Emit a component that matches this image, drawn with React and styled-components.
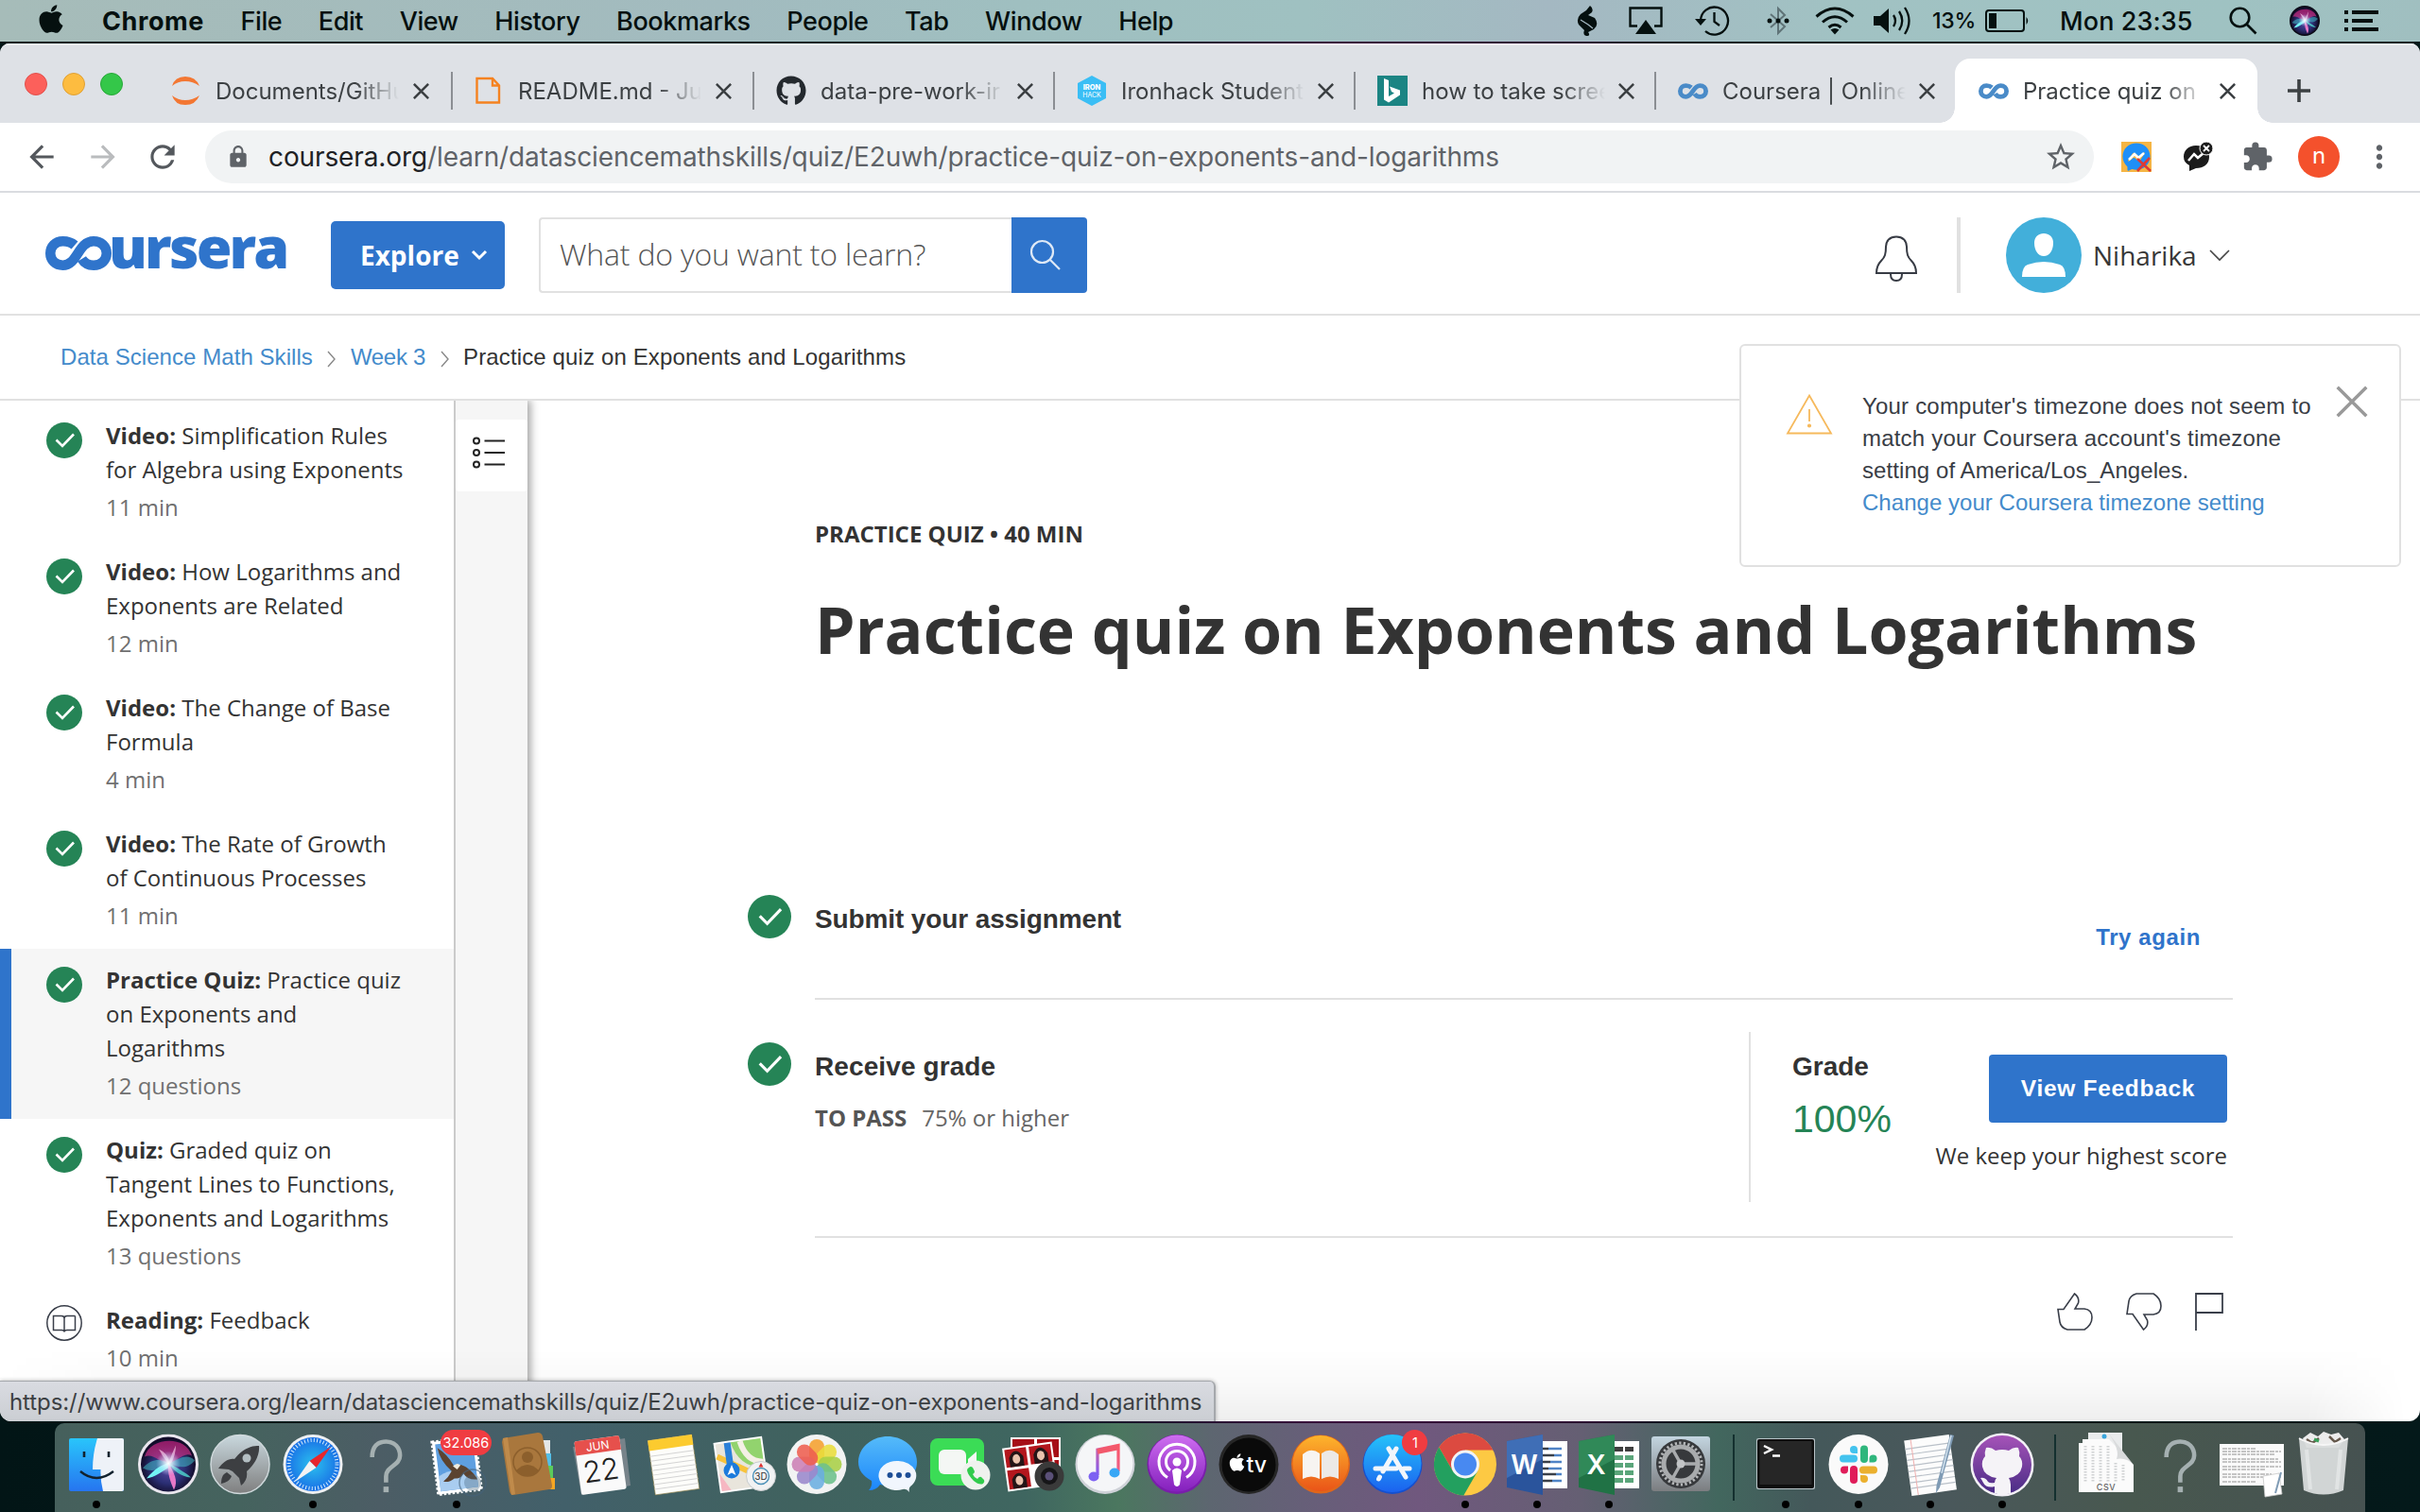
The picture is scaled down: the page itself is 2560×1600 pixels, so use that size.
import React from "react";
import styled, { createGlobalStyle, css } from "styled-components";
import { FaApple, FaGithub, FaFacebookMessenger } from "react-icons/fa";
import { MdArrowBack, MdArrowForward, MdRefresh, MdLock, MdStarBorder, MdExtension, MdMoreVert } from "react-icons/md";

const SYSTEM = `Inter, "Liberation Sans", sans-serif`;
const HELV = `"Liberation Sans", Arial, sans-serif`;
const OPEN = `"Open Sans", "Noto Sans", sans-serif`;
const BLUE = "#2f74cb";
const LINK = "#448bcb";
const GREEN = "#258456";
const LINE = "#e1e1e1";

const Global = createGlobalStyle`
  *, *::before, *::after { box-sizing: border-box; }
  body { margin: 0; background: #031d1e; overflow: hidden; }
  svg { display: block; flex: none; }
`;

const Desktop = styled.div`
  width: 2560px;
  height: 1600px;
  display: flex;
  flex-direction: column;
  gap: 2px;
  overflow: hidden;
  background: linear-gradient(90deg, #021516 0, #04201f 40%, #3a0a3c 55%, #2a0a30 66%, #041616 70%, #04191a 100%);
  font-family: ${SYSTEM};
`;

/* ---------- menu bar ---------- */

const MenuBar = styled.div`
  height: 44px;
  flex: none;
  display: flex;
  align-items: center;
  padding: 0 44px 0 40px;
  color: #05100f;
  font-size: 27px;
  background: linear-gradient(90deg, #a6bcb9 0, #a2bbbf 30%, #9fbfc0 42%, #9fc1c1 54%, #a4b8c2 64%, #a1c2c3 76%, #9fc2c2 92%, #a0bfc0 100%);
`;
const AppleMark = styled(FaApple)`
  width: 28px;
  height: 34px;
  margin-top: -4px;
  margin-right: 40px;
`;
const MenuItem = styled.span`
  margin-right: 38.5px;
  font-weight: ${(p) => (p.$bold ? 700 : 450)};
  letter-spacing: ${(p) => p.$ls || "-0.4px"};
  white-space: nowrap;
`;
const StatusArea = styled.div`
  margin-left: auto;
  display: flex;
  align-items: center;
`;
const StatusCell = styled.div`
  display: flex;
  align-items: center;
  margin-left: ${(p) => p.$gap}px;
`;
const Percent = styled.span`
  width: 48px;
  font-size: 23px;
  letter-spacing: -0.2px;
  font-weight: 450;
  white-space: nowrap;
`;
const Clock = styled.span`
  width: 141px;
  font-weight: 450;
  letter-spacing: 0.1px;
  white-space: nowrap;
`;

/* ---------- browser window ---------- */

const Window = styled.div`
  position: relative;
  height: 1458px;
  flex: none;
  display: flex;
  flex-direction: column;
  background: #fff;
  border-radius: 10px 10px 12px 12px;
  overflow: hidden;
`;
const TabStrip = styled.div`
  height: 84px;
  flex: none;
  display: flex;
  align-items: flex-end;
  background: #dee1e6;
  border-top: 2px solid #eceef1;
`;
const Lights = styled.div`
  height: 82px;
  width: 159px;
  padding: 0 0 0 26px;
  display: flex;
  align-items: center;
  gap: 16px;
`;
const Light = styled.i`
  width: 24px;
  height: 24px;
  border-radius: 50%;
  background: ${(p) => p.$c};
  border: 1px solid ${(p) => p.$b};
`;
const Tab = styled.div`
  position: relative;
  width: ${(p) => p.$w}px;
  height: 68px;
  flex: none;
  display: flex;
  align-items: center;
  padding-left: ${(p) => (p.$active ? 25 : 23)}px;
  border-radius: 16px 16px 0 0;
  ${(p) =>
    p.$active &&
    css`
      background: #fff;
      &::before,
      &::after {
        content: "";
        position: absolute;
        bottom: 0;
        width: 16px;
        height: 16px;
      }
      &::before {
        left: -16px;
        background: radial-gradient(circle at 0 0, transparent 15.5px, #fff 16px);
      }
      &::after {
        right: -16px;
        background: radial-gradient(circle at 100% 0, transparent 15.5px, #fff 16px);
      }
    `}
`;
const TabTitle = styled.span`
  width: ${(p) => (p.$snug ? 205 : 204)}px;
  margin: 0 4px 0 ${(p) => (p.$snug ? 14 : 15)}px;
  white-space: nowrap;
  font-size: 24px;
  font-weight: 400;
  color: #3c4043;
  mask-image: linear-gradient(90deg, #000 148px, transparent 194px);
`;
const TabDivider = styled.i`
  width: 2px;
  height: 40px;
  margin-left: auto;
  background: #8b8e93;
`;
const NewTab = styled.div`
  height: 68px;
  padding-left: 32px;
  display: flex;
  align-items: center;
`;
const Toolbar = styled.div`
  height: 74px;
  flex: none;
  display: flex;
  align-items: center;
  padding-left: 25px;
  border-bottom: 2px solid #dadce0;
  color: #5f6368;
`;
const NavIcon = styled.span`
  width: 36px;
  margin-right: ${(p) => p.$gap || 29}px;
  display: flex;
  color: ${(p) => (p.$dim ? "#babcbe" : "#54585d")};
`;
const Omnibox = styled.div`
  width: 1998px;
  height: 56px;
  border-radius: 28px;
  background: #f1f3f4;
  display: flex;
  align-items: center;
  padding: 0 17px 0 22px;
  margin-left: -3px;
`;
const Url = styled.span`
  flex: 1;
  margin-left: 19px;
  font-size: 28px;
  letter-spacing: -0.11px;
  color: #5f6368;
  white-space: nowrap;
  b {
    font-weight: 400;
    color: #202124;
  }
`;
const Extensions = styled.div`
  display: flex;
  align-items: center;
  gap: 30px;
  margin-left: 29px;
`;
const ExtensionPair = styled.div`
  display: flex;
  align-items: center;
  gap: 33px;
`;
const Profile = styled.span`
  width: 44px;
  height: 44px;
  margin: 0 23px 0 26px;
  border-radius: 50%;
  background: #f4512c;
  color: #fff;
  font-size: 24px;
  line-height: 42px;
  text-align: center;
`;

/* ---------- coursera header ---------- */

const SiteHeader = styled.header`
  height: 130px;
  flex: none;
  display: flex;
  align-items: center;
  padding-left: 48px;
  border-bottom: 2px solid ${LINE};
`;
const Brand = styled.div`
  width: 302px;
  display: flex;
  align-items: center;
  color: ${BLUE};
  span {
    margin: -15px 0 0 -3px;
    font: 800 61px/70px ${OPEN};
    letter-spacing: -2.8px;
  }
`;
const Explore = styled.button`
  width: 184px;
  height: 72px;
  padding: 0 0 0 31px;
  margin: 4px 36px 0 0;
  border: 0;
  border-radius: 5px;
  background: ${BLUE};
  color: #fff;
  font: 700 28px/40px ${OPEN};
  display: flex;
  align-items: center;
  gap: 12px;
`;
const Search = styled.div`
  display: flex;
  margin-top: 4px;
`;
const SearchInput = styled.div`
  width: 500px;
  height: 80px;
  border: 2px solid ${LINE};
  border-right: 0;
  border-radius: 4px 0 0 4px;
  padding-left: 20px;
  font: 300 32px/74px ${OPEN};
  letter-spacing: -0.2px;
  color: #555;
  white-space: nowrap;
`;
const SearchButton = styled.button`
  width: 80px;
  height: 80px;
  border: 0;
  border-radius: 0 4px 4px 0;
  background: ${BLUE};
  display: flex;
  align-items: center;
  padding: 0 0 0 19px;
`;
const Account = styled.div`
  margin: 4px 200px 0 auto;
  display: flex;
  align-items: center;
`;
const Bell = styled.svg.attrs({ width: 46, height: 50, viewBox: "0 0 46 50" })`
  margin-top: 7px;
`;
const AccountDivider = styled.i`
  width: 4px;
  height: 80px;
  margin: 0 48px 0 41px;
  background: ${LINE};
`;
const UserName = styled.span`
  width: 110px;
  margin: -1px 12px 0 12px;
  font: 400 28px/40px ${OPEN};
  color: #373737;
`;

const Breadcrumbs = styled.nav`
  height: 90px;
  flex: none;
  display: flex;
  align-items: center;
  padding-left: 64px;
  border-bottom: 2px solid ${LINE};
  font: 400 24px/36px ${HELV};
  letter-spacing: 0.13px;
  color: #333;
  white-space: nowrap;
`;
const Crumb = styled.span`
  letter-spacing: ${(p) => p.$ls}px;
  color: ${LINK};
`;
const CrumbArrow = styled.svg.attrs({ width: 9, height: 18, viewBox: "0 0 9 18" })`
  margin: 4px 15.5px 0;
`;

/* ---------- course body ---------- */

const Body = styled.div`
  flex: 1;
  display: flex;
  min-height: 0;
`;
const Sidebar = styled.aside`
  width: 482px;
  flex: none;
  padding-top: 4px;
  border-right: 2px solid #cbcbcb;
  overflow: hidden;
`;
const Lesson = styled.div`
  display: flex;
  align-items: flex-start;
  padding: 15px 40px 17px ${(p) => (p.$on ? 37 : 49)}px;
  border-left: ${(p) => (p.$on ? `12px solid ${BLUE}` : "0")};
  background: ${(p) => (p.$on ? "#f6f6f6" : "#fff")};
  > svg {
    margin: ${(p) => (p.$outlined ? 2 : 4)}px 25px 0 0;
  }
`;
const LessonText = styled.div`
  font: 400 24px/36px ${OPEN};
  color: #333;
  white-space: nowrap;
  b {
    font-weight: 700;
  }
`;
const LessonMeta = styled.div`
  margin-top: 4px;
  color: #707070;
`;
const Rail = styled.div`
  width: 76px;
  flex: none;
  padding-top: 20px;
  background: #f6f6f6;
  box-shadow: 2px 0 9px 1px rgba(0, 0, 0, 0.38);
  clip-path: inset(0 -16px 0 0);
`;
const RailButton = styled.div`
  height: 76px;
  background: #fff;
  border-radius: 4px;
  display: flex;
  align-items: center;
  padding: 0 0 7px 18px;
`;
const Main = styled.main`
  flex: 1;
  padding: 123px 0 0 233px;
`;
const Eyebrow = styled.div`
  margin-left: 71px;
  font: 700 24px/36px ${OPEN};
  color: #333;
`;
const Title = styled.h1`
  margin: 38px 0 219px 71px;
  font: 700 68px/90px ${OPEN};
  color: #333;
  white-space: nowrap;
`;
const Step = styled.section`
  display: flex;
  gap: 25px;
  > svg {
    margin-top: ${(p) => p.$top}px;
  }
`;
const StepBody = styled.div`
  width: 1500px;
  height: ${(p) => p.$h}px;
  display: flex;
  justify-content: space-between;
  border-bottom: 2px solid ${LINE};
`;
const StepInfo = styled.div`
  padding-top: ${(p) => p.$top}px;
`;
const StepTitle = styled.h2`
  margin: 0;
  font: 700 28px/40px ${HELV};
  letter-spacing: ${(p) => p.$ls || 0}px;
  color: #333;
`;
const Requirement = styled.div`
  margin-top: 16px;
  display: flex;
  gap: 16px;
  font: 400 24px/36px ${OPEN};
  color: #666;
  b {
    color: #555;
  }
`;
const TryAgain = styled.a`
  margin: 44px 34px 0 0;
  font: 700 24px/36px ${HELV};
  letter-spacing: 0.6px;
  color: ${BLUE};
`;
const GradePanel = styled.div`
  width: 512px;
  height: 180px;
  margin-top: 34px;
  padding: 0 6px 0 44px;
  display: flex;
  justify-content: space-between;
  border-left: 2px solid ${LINE};
`;
const GradeValue = styled.div`
  padding-top: 17px;
  strong {
    display: block;
    font: 400 41px/48px ${HELV};
    margin-top: 11px;
    color: ${GREEN};
  }
`;
const GradeActions = styled.div`
  padding-top: 24px;
  display: flex;
  flex-direction: column;
  align-items: flex-end;
  gap: 17px;
  font: 400 24px/36px ${OPEN};
  color: #333;
  white-space: nowrap;
`;
const ViewFeedback = styled.button`
  width: 252px;
  height: 72px;
  border: 0;
  border-radius: 4px;
  background: ${BLUE};
  color: #fff;
  font: 700 24.5px/36px ${HELV};
  letter-spacing: 0.7px;
`;
const Reactions = styled.div`
  width: 1561px;
  margin-top: 58px;
  display: flex;
  justify-content: flex-end;
  gap: 35px;
`;

/* ---------- overlays ---------- */

const Notice = styled.div`
  position: absolute;
  top: 318px;
  left: 1840px;
  width: 700px;
  height: 236px;
  display: flex;
  padding: 50px 33px 0 47px;
  background: #fff;
  border: 2px solid ${LINE};
  border-radius: 6px;
`;
const NoticeText = styled.div`
  flex: 1;
  margin: -3px 0 0 31px;
  font: 400 24px/34px ${HELV};
  color: #393d45;
  white-space: nowrap;
`;
const NoticeLine = styled.div`
  letter-spacing: ${(p) => p.$ls}px;
  color: ${(p) => (p.$link ? LINK : "inherit")};
`;
const NoticeClose = styled.span`
  margin-top: -8px;
`;
const BottomShade = styled.div`
  position: absolute;
  left: 0;
  right: 0;
  bottom: 0;
  height: 76px;
  background: linear-gradient(180deg, rgba(0, 0, 0, 0), rgba(0, 0, 0, 0.025) 50%, rgba(0, 0, 0, 0.065));
  mask-image: linear-gradient(90deg, transparent 0, #000 110px, #000 2440px, transparent 2545px);
`;
const LinkPreview = styled.div`
  position: absolute;
  left: 0;
  bottom: 0;
  width: 1286px;
  height: 43px;
  padding: 0 0 0 10px;
  border: 1px solid #a5a8ac;
  border-width: 1px 2px 0 0;
  border-radius: 0 6px 0 0;
  background: linear-gradient(180deg, #d9dbe1, #cbced3);
  box-shadow: 0 0 4px rgba(0, 0, 0, 0.3);
  font-size: 24px;
  line-height: 43px;
  letter-spacing: -0.08px;
  color: #3c4043;
  white-space: nowrap;
`;

/* ---------- dock ---------- */

const Dock = styled.div`
  flex: none;
  width: 2444px;
  height: 94px;
  margin-left: 58px;
  padding: 0 0 0 6px;
  display: flex;
  border-radius: 10px 10px 0 0;
  background: linear-gradient(90deg, #46605c 0, #45635e 8%, #4c5d65 14%, #42606a 22%, #40625f 32%, #3f6660 42%, #4b775f 46%, #5d6670 50%, #665f78 54%, #70587e 59%, #655f73 66%, #42675e 72%, #44585a 76%, #4a585b 82%, #48584f 90%, #465251 100%);
`;
const Slot = styled.div`
  position: relative;
  width: 76.2px;
  height: 94px;
  display: flex;
  flex-direction: column;
  align-items: center;
  padding-top: 8px;
  svg text {
    font-family: ${SYSTEM};
  }
`;
const Dot = styled.i`
  width: 8px;
  height: 8px;
  margin-top: 2px;
  border-radius: 50%;
  background: #000;
`;
const DockDivider = styled.i`
  width: 2px;
  height: 70px;
  margin: 12px 16.5px 0;
  background: #14302f;
`;
const Badge = styled.span`
  position: absolute;
  top: 7px;
  left: ${(p) => p.$x}px;
  width: ${(p) => p.$w}px;
  height: 27px;
  border-radius: 14px;
  background: #f03c41;
  color: #fff;
  font-size: 14.5px;
  line-height: 27px;
  text-align: center;
`;

/* ---------- drawings ---------- */

const Infinity = ({ w, h, color = "#4a8bc8" }) => (
  <svg width={w} height={h} viewBox="0 0 70 36" fill="none" stroke={color} strokeWidth="10.5">
    <path d="M31 9.5C27.500 6.500 23 5.250 18.500 5.250C10.500 5.250 5.250 10.800 5.250 18C5.250 25.200 10.500 30.750 18.500 30.750C34 30.750 34.500 5.250 51 5.250C59 5.250 64.750 10.800 64.750 18C64.750 25.200 59 30.750 51 30.750C45 30.750 41 28 38.500 24" />
  </svg>
);
const Check = ({ s }) => (
  <svg width={s} height={s} viewBox="0 0 38 38">
    <circle cx="19" cy="19" r="19" fill={GREEN} />
    <path d="M10.500 18.500L17 25L29 12.500" fill="none" stroke="#fff" strokeWidth="2.600" />
  </svg>
);
const BookBadge = () => (
  <svg width="38" height="38" viewBox="0 0 38 38" fill="none" stroke="#3a3f4a" strokeWidth="1.500">
    <circle cx="19" cy="19" r="18.200" />
    <path d="M7.500 11.500H16Q19 11.500 19 14V28.500Q19 26.500 16 26.500H7.500ZM30.500 11.500H22Q19 11.500 19 14M30.500 11.500V26.500H22Q19 26.500 19 28.500" />
  </svg>
);
const Cross = ({ s, color, w }) => (
  <svg width={s} height={s} viewBox="0 0 20 20" stroke={color} strokeWidth={w}>
    <path d="M1 1L19 19M19 1L1 19" />
  </svg>
);
const Siri = ({ s }) => (
  <svg width={s} height={s} viewBox="0 0 64 64">
    <defs>
      <radialGradient id="siriBase" cx=".5" cy=".55" r=".5">
        <stop offset="0" stopColor="#5a4ba8" />
        <stop offset=".6" stopColor="#2b2f74" />
        <stop offset="1" stopColor="#120c2a" />
      </radialGradient>
      <linearGradient id="siriPink" x1="0" y1="0" x2="0" y2="1">
        <stop offset="0" stopColor="#8d1b66" />
        <stop offset="1" stopColor="#e23c94" stopOpacity=".55" />
      </linearGradient>
      <radialGradient id="siriGlow">
        <stop offset="0" stopColor="#fff" />
        <stop offset=".35" stopColor="#e9f4ff" stopOpacity=".7" />
        <stop offset="1" stopColor="#bcd7ff" stopOpacity="0" />
      </radialGradient>
    </defs>
    <circle cx="32" cy="32" r="32" fill={s > 40 ? "#e9e6ee" : "#0b0a16"} />
    <circle cx="32" cy="32" r="29" fill="url(#siriBase)" />
    <path d="M7 24C12 4 50 0 57 23C48 18 40 31 32 31C24 31 16 20 7 24Z" fill="url(#siriPink)" />
    <path d="M5 36C16 24 26 27 33 31C44 26 52 20 60 28C52 38 42 35 33 31C24 38 14 41 5 36Z" fill="#43c9cf" opacity=".5" />
    <path d="M9 47C18 36 25 33 33 30L35 34C26 39 18 46 9 47Z" fill="#73f2f4" />
    <path d="M32 31C38 40 43 50 38 59C34 50 31 42 32 31Z" fill="#e879c8" />
    <path d="M33 30C40 36 50 40 56 46C45 45 37 39 33 30Z" fill="#4fd8d0" opacity=".8" />
    <path d="M31 30Q26 24 22 16Q31 20 33 29Q36 20 40 12Q40 22 35 31Z" fill="#f7c6e6" opacity=".7" />
    <circle cx="32" cy="31" r="13" fill="url(#siriGlow)" />
  </svg>
);
const I = ({ children, w = 64 }) => (
  <svg width={w} height="72" viewBox={`0 0 ${w} 72`}>
    {children}
  </svg>
);
const Question = () => (
  <I>
    <g transform="translate(15 6) scale(.92)" fill="none" stroke="#a5b0b1" strokeWidth="5">
      <path d="M4 24C4 12 10 6 20 6C30 6 36 13 36 22C36 34 20 34 20 46V53" />
      <path d="M17 61H23" strokeWidth="6.500" />
    </g>
  </I>
);
const SiriApp = () => (
  <I>
    <g transform="translate(0 3.500)">
      <Siri s={64} />
    </g>
  </I>
);
const Finder = () => (
  <I>
    <defs>
      <linearGradient id="finderBlue" x1="0" y1="0" x2="0" y2="1">
        <stop offset="0" stopColor="#29c5fb" />
        <stop offset="1" stopColor="#2675f0" />
      </linearGradient>
    </defs>
    <rect x="3" y="8" width="58" height="56" rx="2" fill="url(#finderBlue)" />
    <path d="M33 8H59Q61 8 61 10V62Q61 64 59 64H39Q36 52 36.500 41H28Q28 24 33 8Z" fill="#eef2f8" />
    <path d="M19 22V28M45 22V28" stroke="#12222e" strokeWidth="2.600" />
    <path d="M15 43Q32 57 50 43" fill="none" stroke="#12222e" strokeWidth="2.400" />
  </I>
);
const Launchpad = () => (
  <I>
    <defs>
      <linearGradient id="launch" x1="0" y1="0" x2="0" y2="1">
        <stop offset="0" stopColor="#c9d8de" />
        <stop offset="1" stopColor="#7f7f7f" />
      </linearGradient>
    </defs>
    <circle cx="32" cy="35.500" r="31" fill="url(#launch)" stroke="#cfd8db" strokeWidth="1.500" />
    <path d="M52 16C42 15 32 22 26 30C20 29 14 33 9 40L20 41L24 43L31 50L33 58C38 54 40 49 39 43C47 36 53 26 52 16Z" fill="#3d3f42" />
    <path d="M18 44C13 46 12 51 12 56C17 55 21 53 23 48Z" fill="#3d3f42" />
    <circle cx="39" cy="29" r="4.500" fill="#b3bec2" />
  </I>
);
const Safari = () => (
  <I>
    <defs>
      <radialGradient id="safari">
        <stop offset="0" stopColor="#2bc0ee" />
        <stop offset="1" stopColor="#1970e6" />
      </radialGradient>
    </defs>
    <circle cx="32" cy="35.500" r="31.500" fill="#eef0f2" />
    <circle cx="32" cy="35.500" r="28.500" fill="url(#safari)" />
    <circle cx="32" cy="35.500" r="25.500" fill="none" stroke="#d6ebfb" strokeWidth="4" strokeDasharray="1 2.340" />
    <path d="M51 17L35.500 39L28.500 32Z" fill="#e8262b" />
    <path d="M13 54L28.500 32L35.500 39Z" fill="#f3f3f3" />
  </I>
);
const Mail = () => (
  <I>
    <g transform="rotate(-7 32 36)">
      <rect x="9" y="9" width="46" height="56" fill="#fff" stroke="#fff" strokeWidth="3" strokeDasharray="2.500 2" />
      <rect x="12" y="12" width="40" height="50" fill="#5e9fe0" />
      <path d="M12 46Q30 36 52 50V62H12Z" fill="#a9cdf0" />
      <path d="M14 16Q24 24 29 37Q37 34 44 42Q50 48 52 54Q42 54 38 46Q34 52 28 50Q22 54 16 52Q22 48 26 42Q15 30 14 16Z" fill="#5b4330" />
      <path d="M28 37Q33 33 36 37L32 41Z" fill="#f0ece0" />
    </g>
    <circle cx="49" cy="55" r="14" fill="none" stroke="#45637c" strokeWidth="1.500" opacity=".6" />
    <circle cx="49" cy="55" r="9" fill="#45637c" opacity=".35" />
  </I>
);
const Contacts = () => (
  <I>
    <rect x="46" y="10" width="9" height="15" fill="#e4e7e8" />
    <rect x="47" y="24" width="9" height="13" fill="#54bfe8" />
    <rect x="49" y="37" width="9" height="13" fill="#5ccb5a" />
    <rect x="51" y="50" width="9" height="12" fill="#f5a623" />
    <path d="M5 8L42 2Q46 2 47 6L57 58Q57 62 54 62L16 68Q13 68 12 64L4 12Z" fill="#a9773d" />
    <path d="M5 8L10 7L18 67L14 68Z" fill="#c08b4b" />
    <circle cx="31" cy="33" r="15" fill="none" stroke="#8c5f2c" strokeWidth="1.500" />
    <circle cx="31" cy="28" r="6" fill="#8c5f2c" />
    <path d="M19 42Q31 30 43 42Q31 54 19 42Z" fill="#8c5f2c" />
  </I>
);
const CalendarIcon = () => (
  <I>
    <path d="M3 17L58 8L64 58L12 68Z" fill="#77838a" />
    <g transform="rotate(-8 32 36)">
      <rect x="8" y="8" width="48" height="57" rx="2" fill="#fafafa" />
      <path d="M8 10Q8 8 10 8H54Q56 8 56 10V23H8Z" fill="#e6504c" />
      <text x="32" y="20" fontSize="12" fill="#fff" textAnchor="middle">JUN</text>
      <text x="32" y="53" fontSize="31" fontWeight="300" fill="#222" textAnchor="middle">22</text>
    </g>
  </I>
);
const Notes = () => (
  <I>
    <g transform="rotate(-8 32 36)">
      <rect x="9" y="7" width="47" height="58" fill="#fdfdfa" stroke="#8a7a40" strokeWidth=".6" />
      <path d="M9 24H56M9 29H56M9 34H56M9 39H56M9 44H56M9 49H56M9 54H56M9 59H56" stroke="#d4d4d4" strokeWidth="1" />
      <rect x="9" y="7" width="47" height="11" fill="#fccb2f" />
    </g>
  </I>
);
const Maps = () => (
  <I w={68}>
    <g transform="rotate(-8 30 36)">
      <rect x="4" y="9" width="52" height="54" fill="#fff" />
      <rect x="6" y="11" width="48" height="50" fill="#e9e5dc" />
      <path d="M22 11H54V42Q28 40 22 11Z" fill="#92d36e" />
      <path d="M32 11Q36 34 54 36" fill="none" stroke="#f4f0e6" strokeWidth="6" />
      <path d="M6 24L40 46" stroke="#f8c33c" strokeWidth="6" />
      <path d="M6 42L16 61H6Z" fill="#f6b7c2" />
      <rect x="15" y="11" width="7" height="36" fill="#2b80d8" />
    </g>
    <circle cx="20" cy="42" r="8.500" fill="#1c7bdc" />
    <path d="M20 36L24.500 47L20 44.500L15.500 47Z" fill="#fff" />
    <circle cx="51" cy="48" r="15.500" fill="#f1f2f3" stroke="#c8cbcd" />
    <circle cx="51" cy="48" r="8.500" fill="none" stroke="#4a90b8" strokeWidth="1.400" />
    <text x="51" y="52" fontSize="10" textAnchor="middle" fill="#333">3D</text>
    <path d="M51 34L53.500 38.500H48.500Z" fill="#d33" />
  </I>
);
const Photos = () => {
  const petals = ["#f5a02f", "#e9dd3b", "#a8cf45", "#6cc08b", "#6aaee0", "#9a87cc", "#cc7fb5", "#ee5f50"];
  return (
    <I>
      <circle cx="32" cy="35.500" r="31.500" fill="#f2f3f3" />
      {petals.map((c, i) => (
        <rect key={c} x="24" y="9" width="16" height="25" rx="8" fill={c} opacity=".88" transform={`rotate(${i * 45} 32 35.500)`} />
      ))}
    </I>
  );
};
const Messages = () => (
  <I>
    <defs>
      <linearGradient id="msg" x1="0" y1="0" x2="0" y2="1">
        <stop offset="0" stopColor="#55bbf9" />
        <stop offset="1" stopColor="#1c86fb" />
      </linearGradient>
    </defs>
    <path d="M31 6C48 6 62 18 62 33C62 49 47 58 31 58Q26 58 23 57Q19 63 11 63Q15 59 14 53C5 48 0 42 0 33C0 18 14 6 31 6Z" fill="url(#msg)" />
    <path d="M42 32A19 15.500 0 1 0 47 62Q51 61 54 65Q53 61 55 59A19 15.500 0 0 0 42 32Z" fill="#f1f6fd" />
    <circle cx="33.500" cy="47" r="3" fill="#1d4e96" />
    <circle cx="43" cy="47" r="3" fill="#1d4e96" />
    <circle cx="52.500" cy="47" r="3" fill="#1d4e96" />
  </I>
);
const FaceTime = () => (
  <I>
    <rect x="0" y="8" width="57" height="50" rx="8" fill="#3bdc56" />
    <rect x="9" y="20" width="29" height="26" rx="6" fill="#f4f7f4" />
    <path d="M40 30L49 22V44L40 38Z" fill="#f4f7f4" />
    <circle cx="48" cy="47" r="15.500" fill="#eff2ee" />
    <path d="M41 39Q43 37 45 39L47 43Q47 45 45 46Q46 49 50 51Q52 48 54 49L57 52Q58 54 56 56Q52 58 46 53Q40 47 39 42Q39 40 41 39Z" fill="#31cb4c" />
  </I>
);
const PhotoBooth = () => (
  <I w={68}>
    <rect x="10" y="7" width="53" height="44" fill="#fff" />
    <path d="M12 9H35V28H12ZM38 9H61V28H38ZM38 31H61V49H38Z" fill="#a60f17" />
    <g transform="rotate(-8 30 38)">
      <rect x="4" y="15" width="53" height="46" fill="#fff" />
      <path d="M6 17H29V36H6ZM32 17H55V36H32ZM6 39H29V59H6Z" fill="#b3161d" />
      <path d="M10 36V26Q17 13 25 26V36ZM36 36V26Q43 13 51 26V36ZM10 59V49Q17 37 25 49V59Z" fill="#241517" />
      <ellipse cx="17.500" cy="28" rx="4" ry="5" fill="#eac3ae" />
      <ellipse cx="43.500" cy="28" rx="4" ry="5" fill="#eac3ae" />
      <ellipse cx="17.500" cy="51" rx="4" ry="5" fill="#eac3ae" />
    </g>
    <circle cx="51" cy="48" r="15.500" fill="#3a3a3a" />
    <circle cx="51" cy="48" r="9" fill="#161618" />
    <circle cx="51" cy="48" r="4.500" fill="#5a5078" />
  </I>
);
const Music = () => (
  <I>
    <defs>
      <linearGradient id="note" x1="0" y1="1" x2="1" y2="0">
        <stop offset="0" stopColor="#7a5cf5" />
        <stop offset=".6" stopColor="#ee5f86" />
        <stop offset="1" stopColor="#fb5466" />
      </linearGradient>
    </defs>
    <circle cx="32" cy="35.500" r="31.500" fill="#cfd2d8" />
    <circle cx="32" cy="34.500" r="29.500" fill="#f5f6f8" />
    <path d="M24 47V20L46 15.500V43" fill="none" stroke="url(#note)" strokeWidth="3.200" />
    <path d="M24 22L46 17.500" stroke="#f2596c" strokeWidth="5.500" />
    <ellipse cx="20" cy="48.500" rx="5.500" ry="5" fill="#7d62f2" />
    <ellipse cx="42" cy="44.500" rx="5.500" ry="5" fill="#39a7f5" />
  </I>
);
const Podcasts = () => (
  <I>
    <defs>
      <linearGradient id="pod" x1="0" y1="0" x2="0" y2="1">
        <stop offset="0" stopColor="#ce6ef0" />
        <stop offset="1" stopColor="#8420bd" />
      </linearGradient>
    </defs>
    <circle cx="32" cy="35.500" r="31.500" fill="#7a1dab" />
    <circle cx="32" cy="34.500" r="30" fill="url(#pod)" />
    <g fill="none" stroke="#fff" strokeWidth="3">
      <path d="M22 49.500A19 19 0 1 1 42 49.500" />
      <path d="M25 42A11.500 11.500 0 1 1 39 42" />
    </g>
    <circle cx="32" cy="33" r="4.500" fill="#fff" />
    <path d="M27 42Q32 37 37 42L35 57Q32 61 29 57Z" fill="#fff" />
  </I>
);
const TvIcon = () => (
  <I>
    <circle cx="32" cy="35.500" r="31.500" fill="#262626" />
    <circle cx="32" cy="36" r="28.500" fill="#0a0a0a" />
    <FaApple x="9" y="23" size={21} color="#fff" />
    <text x="29.500" y="43.500" fontSize="23" fontWeight="500" fill="#fff">tv</text>
  </I>
);
const Books = () => (
  <I>
    <defs>
      <linearGradient id="books" x1="0" y1="0" x2="0" y2="1">
        <stop offset="0" stopColor="#fdb52c" />
        <stop offset="1" stopColor="#ea5418" />
      </linearGradient>
    </defs>
    <circle cx="32" cy="35.500" r="31" fill="#e0661a" />
    <circle cx="32" cy="34.500" r="29.500" fill="url(#books)" />
    <path d="M13 25Q22 17 31 24V51Q22 46 13 51Z" fill="#f7f4f1" />
    <path d="M51 25Q42 17 33 24V51Q42 46 51 51Z" fill="#ece9e6" />
  </I>
);
const AppStore = () => (
  <I>
    <defs>
      <linearGradient id="store" x1="0" y1="0" x2="0" y2="1">
        <stop offset="0" stopColor="#25c3fa" />
        <stop offset="1" stopColor="#1b62ef" />
      </linearGradient>
    </defs>
    <circle cx="32" cy="35.500" r="31.500" fill="#1450d0" />
    <circle cx="32" cy="34.500" r="30.500" fill="url(#store)" />
    <g stroke="#f2f6fb" strokeWidth="5" strokeLinecap="round">
      <path d="M36 19L22 43M28 19L46 49M14 40H36M44 40H50M18.500 49L17.500 51" />
    </g>
  </I>
);
const Chrome = () => (
  <I w={68}>
    <circle cx="34" cy="35.500" r="33" fill="#fdc943" />
    <path d="M34 20.500H63.400A33 33 0 0 0 6.300 17.500L21 43L34 35.500Z" fill="#dc4a40" />
    <path d="M6.300 17.500A33 33 0 0 0 32.300 68.500L47 43L34 35.500L21 43Z" fill="#23a05f" />
    <circle cx="34" cy="35.500" r="15" fill="#f4f4f4" />
    <circle cx="34" cy="35.500" r="12" fill="#4889f1" />
  </I>
);
const OfficeIcon = ({ letter, dark, light, sheet }) => (
  <I>
    <rect x="30" y="11" width="34" height="50" fill="#fff" />
    {sheet ? (
      <g>
        <path d="M38 17H47V22H38ZM49 17H58V22H49Z" fill="#3e3e3e" />
        <path d="M38 26H47V31H38ZM49 26H58V31H49ZM38 34H47V39H38ZM49 34H58V39H49ZM38 42H47V47H38ZM49 42H58V47H49ZM38 50H47V55H38ZM49 50H58V55H49Z" fill="#5aa57a" />
      </g>
    ) : (
      <g>
        <path d="M38 19H44M38 26H50M38 33H46M38 40H44M38 46H52M38 53H48" stroke="#3a3f48" strokeWidth="2.600" />
        <path d="M44 19H58M50 26H58M46 33H58M44 40H58M52 46H58M48 53H58" stroke="#4f83c6" strokeWidth="2.600" />
      </g>
    )}
    <path d="M0 11L38 4V68L0 60Z" fill={dark} />
    <path d="M0 11L38 4V30L0 50Z" fill={light} opacity=".6" />
    <text x="18.500" y="46" fontSize="28" fontWeight="600" fill="#fff" textAnchor="middle">{letter}</text>
  </I>
);
const Preferences = () => (
  <I>
    <defs>
      <linearGradient id="pref" x1="0" y1="0" x2="0" y2="1">
        <stop offset="0" stopColor="#c3d5e0" />
        <stop offset="1" stopColor="#7b7d80" />
      </linearGradient>
    </defs>
    <rect x="1" y="6" width="62" height="58" rx="3" fill="url(#pref)" />
    <circle cx="32" cy="35" r="26" fill="#37393c" />
    <circle cx="32" cy="35" r="22" fill="none" stroke="#b4b6b8" strokeWidth="3" strokeDasharray="2.300 2.300" />
    <circle cx="32" cy="35" r="18" fill="none" stroke="#a9abad" strokeWidth="5" />
    <path d="M32 35H50M32 35L23 19M32 35L23 51" stroke="#a9abad" strokeWidth="3.500" />
    <circle cx="32" cy="35" r="4.500" fill="#c2c4c6" />
  </I>
);
const Terminal = () => (
  <I>
    <rect x="1" y="8" width="62" height="54" rx="2" fill="#b8c4c8" />
    <rect x="2" y="9" width="60" height="52" rx="2" fill="#0e0e0e" />
    <rect x="4.500" y="11" width="55" height="46" fill="#262626" />
    <path d="M9 16L17 20L9 24" fill="none" stroke="#fff" strokeWidth="2.500" />
    <path d="M18 26.500H26" stroke="#fff" strokeWidth="2.500" />
  </I>
);
const Slack = () => (
  <I>
    <circle cx="32" cy="35.500" r="31.500" fill="#fafafa" />
    <g strokeWidth="8" strokeLinecap="round">
      <path d="M27 29.500H16" stroke="#44c3ee" />
      <path d="M38 19.500V30" stroke="#2fb67c" />
      <path d="M37 41.500H48" stroke="#ebb02e" />
      <path d="M27 41V52" stroke="#e01d5a" />
    </g>
    <path d="M31 24H27A4 4 0 1 1 31 20Z" fill="#44c3ee" />
    <path d="M43.500 33.500V29.500A4 4 0 1 1 47.500 33.500Z" fill="#2fb67c" />
    <path d="M34 47H38A4 4 0 1 1 34 51Z" fill="#ebb02e" />
    <path d="M21 37.500V41.500A4 4 0 1 1 17 37.500Z" fill="#e01d5a" />
  </I>
);
const TextEdit = () => (
  <I>
    <g transform="rotate(-8 32 36)">
      <rect x="8" y="7" width="48" height="59" fill="#fcfcfc" />
      <path d="M8 16H56M8 22H56M8 28H56M8 34H56M8 40H56M8 46H56M8 52H56M8 58H56" stroke="#b9c0c8" strokeWidth="1.200" />
      <path d="M15 7V66" stroke="#efb0b0" strokeWidth="1" />
    </g>
    <path d="M53 4L57 5L42 60L38 66L38.500 58Z" fill="#7f9bb5" />
    <path d="M54 5L44 45" stroke="#d5e4f0" strokeWidth="1.400" />
  </I>
);
const GithubDesktop = () => (
  <I w={68}>
    <defs>
      <linearGradient id="gh" x1="0" y1="0" x2="0" y2="1">
        <stop offset="0" stopColor="#a653b8" />
        <stop offset="1" stopColor="#492c85" />
      </linearGradient>
    </defs>
    <circle cx="34" cy="36" r="33.500" fill="#f3f0f6" />
    <circle cx="34" cy="36" r="31" fill="url(#gh)" />
    <path d="M17 18Q22 17 27 21Q34 19 41 21Q46 17 51 18Q53 23 52 27Q56 31 55 38Q53 48 41 50Q43 53 43 57V66Q34 69 26 66V59Q17 61 14 55Q12 51 11 50Q16 49 19 54Q21 56 26 55Q26 52 28 50Q15 48 13 38Q12 31 16 27Q15 23 17 18Z" fill="#f5f3f7" />
  </I>
);
const CsvFile = () => (
  <I>
    <path d="M12 2H48V26H12Z" fill="#e9ebec" />
    <circle cx="29" cy="6" r="2.500" fill="#3aa6dc" />
    <path d="M2 13H6V9H34L60 36V65H2Z" fill="#fbfbfb" />
    <path d="M33 2L60 36Q52 28 42 30Q46 20 33 2Z" fill="#d9dbdc" />
    <path d="M9 16V54M17 16V54M25 16V54M33 16V54M41 34V54M49 36V54" stroke="#d0d2d3" strokeWidth="3" strokeDasharray="1.500 1.500" />
    <text x="31" y="63" fontSize="9" fontWeight="500" textAnchor="middle" fill="#666" letterSpacing=".5">CSV</text>
  </I>
);
const MinimisedDoc = () => (
  <I w={70}>
    <rect x="1" y="14" width="68" height="44" fill="#fafafa" />
    <path d="M4 19H40M4 22H66M4 25H60M4 30H64M4 33H66M4 38H66M4 41H50M4 46H56M4 49H66M4 54H40" stroke="#b4b4b4" strokeWidth="1.300" strokeDasharray="5 1 3 1" />
    <path d="M47 48L64 45L67 67L49 70Z" fill="#fff" stroke="#c8c8c8" strokeWidth=".8" />
    <path d="M66 44L60 66" stroke="#7f9bb5" strokeWidth="2" />
  </I>
);
const Trash = () => (
  <I>
    <path d="M10 8L18 2L26 6L32 1L40 4L48 2L54 9L48 18H14Z" fill="#ececec" />
    <path d="M14 9L20 13L27 8M38 6L44 12L50 8" fill="none" stroke="#66594c" strokeWidth="2.500" />
    <path d="M22 9L27 11" stroke="#3aa05a" strokeWidth="3" />
    <path d="M6 8Q32 22 58 8L53 63Q32 72 11 63Z" fill="#d9dcdc" opacity=".95" />
    <path d="M6 8Q32 22 58 8" fill="none" stroke="#f6f6f6" strokeWidth="1.800" />
    <path d="M14 20L18 62M50 20L46 62" stroke="#eceeee" strokeWidth="4" opacity=".6" />
  </I>
);

const lessons = [
  { kind: "Video:", lines: ["Simplification Rules", "for Algebra using Exponents"], meta: "11 min" },
  { kind: "Video:", lines: ["How Logarithms and", "Exponents are Related"], meta: "12 min" },
  { kind: "Video:", lines: ["The Change of Base", "Formula"], meta: "4 min" },
  { kind: "Video:", lines: ["The Rate of Growth", "of Continuous Processes"], meta: "11 min" },
  { kind: "Practice Quiz:", lines: ["Practice quiz", "on Exponents and", "Logarithms"], meta: "12 questions", on: true },
  { kind: "Quiz:", lines: ["Graded quiz on", "Tangent Lines to Functions,", "Exponents and Logarithms"], meta: "13 questions" },
  { kind: "Reading:", lines: ["Feedback"], meta: "10 min", reading: true },
];

const JupyterIcon = () => (
  <svg width="32" height="32" viewBox="0 0 32 32" fill="#f37733">
    <path d="M0 11Q3 1 14 1Q25 1 29 11Q22 6 14 6Q6 6 0 11Z" />
    <path d="M0 21Q3 31 14 31Q25 31 29 21Q22 26 14 26Q6 26 0 21Z" />
  </svg>
);
const FileIcon = () => (
  <svg width="32" height="32" viewBox="0 0 32 32" fill="none" stroke="#f58220" strokeWidth="2.400">
    <path d="M2.500 3H19L26 10.500V28.500H2.500ZM19 3V10.500H26" />
  </svg>
);
const IronhackIcon = () => (
  <svg width="32" height="32" viewBox="0 0 32 32">
    <path d="M16 0L31 8V24L16 32L1 24V8Z" fill="#3abef5" />
    <text x="16" y="15" fontSize="7.500" fontWeight="800" fill="#fff" textAnchor="middle" fontFamily="Inter, sans-serif">IRON</text>
    <text x="16" y="22.500" fontSize="7" fill="#fff" textAnchor="middle" fontFamily="Inter, sans-serif">HACK</text>
  </svg>
);
const BingIcon = () => (
  <svg width="32" height="32" viewBox="0 0 32 32">
    <rect width="32" height="32" fill="#1b8483" />
    <path d="M7 3L12 5V22L18 18.500L15 17L13 11.500L24 15.500V20.500L12 28.500L7 25.500Z" fill="#fff" />
  </svg>
);

const tabs = [
  { title: "Documents/GitHu", icon: <JupyterIcon />, w: 320, snug: true },
  { title: "README.md - Ju", icon: <FileIcon />, w: 319, snug: true },
  { title: "data-pre-work-ir", icon: <FaGithub size={32} color="#24292e" />, w: 318 },
  { title: "Ironhack Student", icon: <IronhackIcon />, w: 318 },
  { title: "how to take scree", icon: <BingIcon />, w: 318 },
  { title: "Coursera | Online", icon: <Infinity w={32} h={17} />, w: 316 },
  { title: "Practice quiz on", icon: <Infinity w={32} h={17} />, w: 320, active: true },
];

const dock = [
  { el: <Finder />, run: true },
  { el: <SiriApp /> },
  { el: <Launchpad /> },
  { el: <Safari />, run: true },
  { el: <Question /> },
  { el: <Mail />, run: true, badge: "32.086", bx: 21, bw: 54 },
  { el: <Contacts /> },
  { el: <CalendarIcon /> },
  { el: <Notes /> },
  { el: <Maps /> },
  { el: <Photos /> },
  { el: <Messages /> },
  { el: <FaceTime /> },
  { el: <PhotoBooth /> },
  { el: <Music /> },
  { el: <Podcasts /> },
  { el: <TvIcon /> },
  { el: <Books /> },
  { el: <AppStore />, badge: "1", bx: 48, bw: 27 },
  { el: <Chrome />, run: true },
  { el: <OfficeIcon letter="W" dark="#2a549c" light="#4f80c8" />, run: true },
  { el: <OfficeIcon letter="X" dark="#207245" light="#3c9a65" sheet />, run: true },
  { el: <Preferences /> },
  { divider: true },
  { el: <Terminal />, run: true },
  { el: <Slack />, run: true },
  { el: <TextEdit />, run: true },
  { el: <GithubDesktop />, run: true },
  { divider: true },
  { el: <CsvFile /> },
  { el: <Question /> },
  { el: <MinimisedDoc /> },
  { el: <Trash /> },
];

const TopBar = () => (
  <MenuBar>
    <AppleMark />
    <MenuItem $bold $ls="0.6px">Chrome</MenuItem>
    {["File", "Edit", "View", "History", "Bookmarks", "People", "Tab", "Window", "Help"].map((m) => (
      <MenuItem key={m}>{m}</MenuItem>
    ))}
    <StatusArea>
      <StatusCell $gap={0}>
        <svg width="22" height="32" viewBox="0 0 22 32" fill="#05100f">
          <path d="M14 0Q18 3 16 7L12 10L19 13Q24 20 18 25L12 28Q15 32 10 32Q6 31 8 26L2 20Q-1 14 4 9L10 5Z" />
          <path d="M4 15L12 20L17 24" fill="none" stroke="#a4b8c2" strokeWidth="1.300" />
        </svg>
      </StatusCell>
      <StatusCell $gap={33}>
        <svg width="36" height="30" viewBox="0 0 36 30" fill="none" stroke="#05100f" strokeWidth="2.400">
          <path d="M9 20.500H1.500V1.500H34.500V20.500H27" />
          <path d="M18 14L29 29H7Z" fill="#05100f" stroke="none" />
        </svg>
      </StatusCell>
      <StatusCell $gap={34}>
        <svg width="37" height="32" viewBox="0 0 37 32" fill="none" stroke="#05100f" strokeWidth="2.300">
          <path d="M6 16A14.500 14.500 0 1 1 11 27" />
          <path d="M0 14H12L6 21Z" fill="#05100f" stroke="none" />
          <path d="M20.500 7V17L26 21" />
        </svg>
      </StatusCell>
      <StatusCell $gap={39}>
        <svg width="24" height="32" viewBox="0 0 24 32">
          <path d="M4 9L19 22L12 29V3L19 10L4 23" fill="none" stroke="#5f7377" strokeWidth="2" />
          <circle cx="3" cy="16" r="2.500" fill="#05100f" />
          <circle cx="12" cy="16" r="2.500" fill="#05100f" />
          <circle cx="21" cy="16" r="2.500" fill="#05100f" />
        </svg>
      </StatusCell>
      <StatusCell $gap={27}>
        <svg width="42" height="30" viewBox="0 0 42 30" fill="none" stroke="#05100f" strokeWidth="3">
          <path d="M1.500 10.500Q21 -6.500 40.500 10.500M8 16.500Q21 5 34 16.500M14.500 22Q21 16.500 27.500 22" />
          <path d="M16.500 24.500Q21 21.500 25.500 24.500L21 29.500Z" fill="#05100f" stroke="none" />
        </svg>
      </StatusCell>
      <StatusCell $gap={20}>
        <svg width="42" height="32" viewBox="0 0 42 32" fill="none" stroke="#05100f" strokeWidth="2.300">
          <path d="M0 11H7L16 3V29L7 21H0Z" fill="#05100f" stroke="none" />
          <path d="M21 10Q25 16 21 22M27 6Q33.500 16 27 26M33 2Q42 16 33 30" />
        </svg>
      </StatusCell>
      <StatusCell $gap={20}>
        <Percent>13%</Percent>
      </StatusCell>
      <StatusCell $gap={8}>
        <svg width="47" height="24" viewBox="0 0 47 24" fill="none" stroke="#05100f" strokeWidth="2">
          <rect x="1" y="1" width="40" height="22" rx="3" />
          <rect x="4" y="4" width="8" height="16" fill="#05100f" stroke="none" />
          <path d="M43.500 8Q47 12 43.500 16Z" fill="#05100f" stroke="none" />
        </svg>
      </StatusCell>
      <StatusCell $gap={32}>
        <Clock>Mon 23:35</Clock>
      </StatusCell>
      <StatusCell $gap={38}>
        <svg width="30" height="30" viewBox="0 0 30 30" fill="none" stroke="#05100f" strokeWidth="2.600">
          <circle cx="11.500" cy="11.500" r="9.800" />
          <path d="M18.500 18.500L28.500 28.500" />
        </svg>
      </StatusCell>
      <StatusCell $gap={34}>
        <Siri s={32} />
      </StatusCell>
      <StatusCell $gap={26}>
        <svg width="36" height="22" viewBox="0 0 36 22" stroke="#05100f" strokeWidth="4">
          <path d="M0 2H4M8 2H36M0 11H4M8 11H30M0 20H4M8 20H36" />
        </svg>
      </StatusCell>
    </StatusArea>
  </MenuBar>
);

const Browser = () => (
  <>
    <TabStrip>
      <Lights>
        <Light $c="#fc605b" $b="#e2504c" />
        <Light $c="#fdbc40" $b="#dfa034" />
        <Light $c="#34c749" $b="#27a838" />
      </Lights>
      {tabs.map((t, i) => (
        <Tab key={i} $w={t.w} $active={t.active}>
          {t.icon}
          <TabTitle $snug={t.snug}>{t.title}</TabTitle>
          <Cross s={17} color="#3c4043" w={3} />
          {i < 5 && <TabDivider />}
        </Tab>
      ))}
      <NewTab>
        <svg width="24" height="24" viewBox="0 0 24 24" stroke="#3c4043" strokeWidth="3.600">
          <path d="M12 0V24M0 12H24" />
        </svg>
      </NewTab>
    </TabStrip>
    <Toolbar>
      <NavIcon><MdArrowBack size={38} /></NavIcon>
      <NavIcon $dim $gap={27}><MdArrowForward size={38} /></NavIcon>
      <NavIcon $gap={31}><MdRefresh size={38} /></NavIcon>
      <Omnibox>
        <MdLock size={26} />
        <Url>
          <b>coursera.org</b>/learn/datasciencemathskills/quiz/E2uwh/practice-quiz-on-exponents-and-logarithms
        </Url>
        <MdStarBorder size={36} />
      </Omnibox>
      <Extensions>
        <ExtensionPair>
          <svg width="32" height="32" viewBox="0 0 32 32">
            <rect width="32" height="32" fill="#f5b544" />
            <FaFacebookMessenger x="1" y="1" size={30} color="#1e8ff8" />
            <path d="M8 19L14 13L18 17L24 12" fill="none" stroke="#fff" strokeWidth="2.500" />
            <path d="M17 18L31 31M30 17L17 31" stroke="#dd3a35" strokeWidth="2.600" />
          </svg>
          <svg width="32" height="32" viewBox="0 0 32 32">
            <path d="M14 4C23 4 28 9 28 16C28 24 22 28 14 28L7 31V25Q1 22 1 16C1 9 6 4 14 4Z" fill="#1b1b1b" />
            <path d="M6 20L12 13L16 17L22 12" fill="none" stroke="#fff" strokeWidth="2.500" />
            <circle cx="25" cy="7" r="7" fill="#1b1b1b" stroke="#fff" strokeWidth="1" />
            <path d="M22 4L28 10M28 4L22 10" stroke="#fff" strokeWidth="1.800" />
          </svg>
        </ExtensionPair>
        <MdExtension size={34} />
      </Extensions>
      <Profile>n</Profile>
      <MdMoreVert size={38} />
    </Toolbar>
  </>
);

export default function App() {
  return (
    <Desktop>
      <Global />
      <TopBar />
      <Window>
        <Browser />
        <SiteHeader>
          <Brand aria-label="coursera">
            <Infinity w={70} h={36} color={BLUE} />
            <span>ursera</span>
          </Brand>
          <Explore>
            Explore
            <svg width="18" height="12" viewBox="0 0 18 12" fill="none" stroke="#fff" strokeWidth="3">
              <path d="M2 2L9 9L16 2" />
            </svg>
          </Explore>
          <Search>
            <SearchInput>What do you want to learn?</SearchInput>
            <SearchButton>
              <svg width="34" height="34" viewBox="0 0 34 34" fill="none" stroke="#dfe9f6" strokeWidth="2.200">
                <circle cx="13.500" cy="13.500" r="11.500" />
                <path d="M22 22L32 32" />
              </svg>
            </SearchButton>
          </Search>
          <Account>
            <Bell fill="none" stroke="#373b44" strokeWidth="2">
              <path d="M23 1.500C16 1.500 12 6 12 12C12 20 11 23 7 27C3 31 2 34 2 40H44C44 34 43 31 39 27C35 23 34 20 34 12C34 6 30 1.500 23 1.500Z" />
              <path d="M17 41Q17 48 23 48Q29 48 29 41" />
            </Bell>
            <AccountDivider />
            <svg width="80" height="80" viewBox="0 0 80 80">
              <circle cx="40" cy="40" r="40" fill="#42afda" />
              <path d="M40 17C46 17 50 21 50 27C50 35 46 41 40 41C34 41 30 35 30 27C30 21 34 17 40 17Z" fill="#fff" />
              <path d="M17 63Q17 52 23 50Q32 47 40 47Q48 47 57 50Q63 52 63 63Z" fill="#fff" />
            </svg>
            <UserName>Niharika</UserName>
            <svg width="24" height="14" viewBox="0 0 24 14" fill="none" stroke="#444" strokeWidth="1.600">
              <path d="M2 2L12 12L22 2" />
            </svg>
          </Account>
        </SiteHeader>
        <Breadcrumbs>
          <Crumb $ls={0.06}>Data Science Math Skills</Crumb>
          <CrumbArrow fill="none" stroke="#888" strokeWidth="1.400"><path d="M1 1L8 9L1 17" /></CrumbArrow>
          <Crumb $ls={-0.3}>Week 3</Crumb>
          <CrumbArrow fill="none" stroke="#888" strokeWidth="1.400"><path d="M1 1L8 9L1 17" /></CrumbArrow>
          Practice quiz on Exponents and Logarithms
        </Breadcrumbs>
        <Body>
          <Sidebar>
            {lessons.map((l, i) => (
              <Lesson key={i} $on={l.on} $outlined={l.reading}>
                {l.reading ? <BookBadge /> : <Check s={38} />}
                <LessonText>
                  {l.lines.map((line, n) => (
                    <div key={n}>
                      {n === 0 && <b>{l.kind} </b>}
                      {line}
                    </div>
                  ))}
                  <LessonMeta>{l.meta}</LessonMeta>
                </LessonText>
              </Lesson>
            ))}
          </Sidebar>
          <Rail>
            <RailButton>
              <svg width="34" height="34" viewBox="0 0 34 34" fill="none" stroke="#222" strokeWidth="2">
                <circle cx="4" cy="4.500" r="3" />
                <circle cx="4" cy="17" r="3" />
                <circle cx="4" cy="29.500" r="3" />
                <path d="M12.500 4.500H34M12.500 17H34M12.500 29.500H34" />
              </svg>
            </RailButton>
          </Rail>
          <Main>
            <Eyebrow>PRACTICE QUIZ • 40 MIN</Eyebrow>
            <Title>Practice quiz on Exponents and Logarithms</Title>
            <Step $top={17}>
              <Check s={46} />
              <StepBody $h={128}>
                <StepInfo $top={23}>
                  <StepTitle $ls={-0.12}>Submit your assignment</StepTitle>
                </StepInfo>
                <TryAgain>Try again</TryAgain>
              </StepBody>
            </Step>
            <Step $top={45}>
              <Check s={46} />
              <StepBody $h={252}>
                <StepInfo $top={51}>
                  <StepTitle $ls={0.1}>Receive grade</StepTitle>
                  <Requirement>
                    <b>TO PASS</b>
                    <span>75% or higher</span>
                  </Requirement>
                </StepInfo>
                <GradePanel>
                  <GradeValue>
                    <StepTitle>Grade</StepTitle>
                    <strong>100%</strong>
                  </GradeValue>
                  <GradeActions>
                    <ViewFeedback>View Feedback</ViewFeedback>
                    We keep your highest score
                  </GradeActions>
                </GradePanel>
              </StepBody>
            </Step>
            <Reactions>
              <svg width="38" height="40" viewBox="0 0 38 40" fill="none" stroke="#3a3f4a" strokeWidth="1.600">
                <path d="M18.500 1Q24 5 22.500 11L19 17H29Q37 18 37 26Q37 34 29 39H11Q4 37 3 31L1 17.500H7Z" />
              </svg>
              <svg width="38" height="40" viewBox="0 0 38 40" fill="none" stroke="#3a3f4a" strokeWidth="1.600">
                <path d="M18.500 39Q24 35 22.500 29L19 23H29Q37 22 37 14Q37 6 29 1H11Q4 3 3 9L1 22.500H7Z" />
              </svg>
              <svg width="30" height="40" viewBox="0 0 30 40" fill="none" stroke="#3a3f4a" strokeWidth="1.800">
                <path d="M1 40V1H29V21H1" />
              </svg>
            </Reactions>
          </Main>
        </Body>
        <BottomShade />
        <LinkPreview>https://www.coursera.org/learn/datasciencemathskills/quiz/E2uwh/practice-quiz-on-exponents-and-logarithms</LinkPreview>
        <Notice>
          <svg width="50" height="44" viewBox="0 0 50 44" fill="none" stroke="#f6b95c" strokeWidth="1.800">
            <path d="M25 2.500L48 42.500H2ZM25 17V30" />
            <circle cx="25" cy="34.500" r="1.200" fill="#f6b95c" />
          </svg>
          <NoticeText>
            <NoticeLine $ls={0.2}>Your computer's timezone does not seem to</NoticeLine>
            <NoticeLine $ls={0.2}>match your Coursera account's timezone</NoticeLine>
            <NoticeLine $ls={0.08}>setting of America/Los_Angeles.</NoticeLine>
            <NoticeLine $link $ls={0.04}>Change your Coursera timezone setting</NoticeLine>
          </NoticeText>
          <NoticeClose>
            <Cross s={34} color="#999" w={2} />
          </NoticeClose>
        </Notice>
      </Window>
      <Dock>
        {dock.map((d, i) =>
          d.divider ? (
            <DockDivider key={i} />
          ) : (
            <Slot key={i}>
              {d.el}
              {d.run && <Dot />}
              {d.badge && <Badge $x={d.bx} $w={d.bw}>{d.badge}</Badge>}
            </Slot>
          )
        )}
      </Dock>
    </Desktop>
  );
}
